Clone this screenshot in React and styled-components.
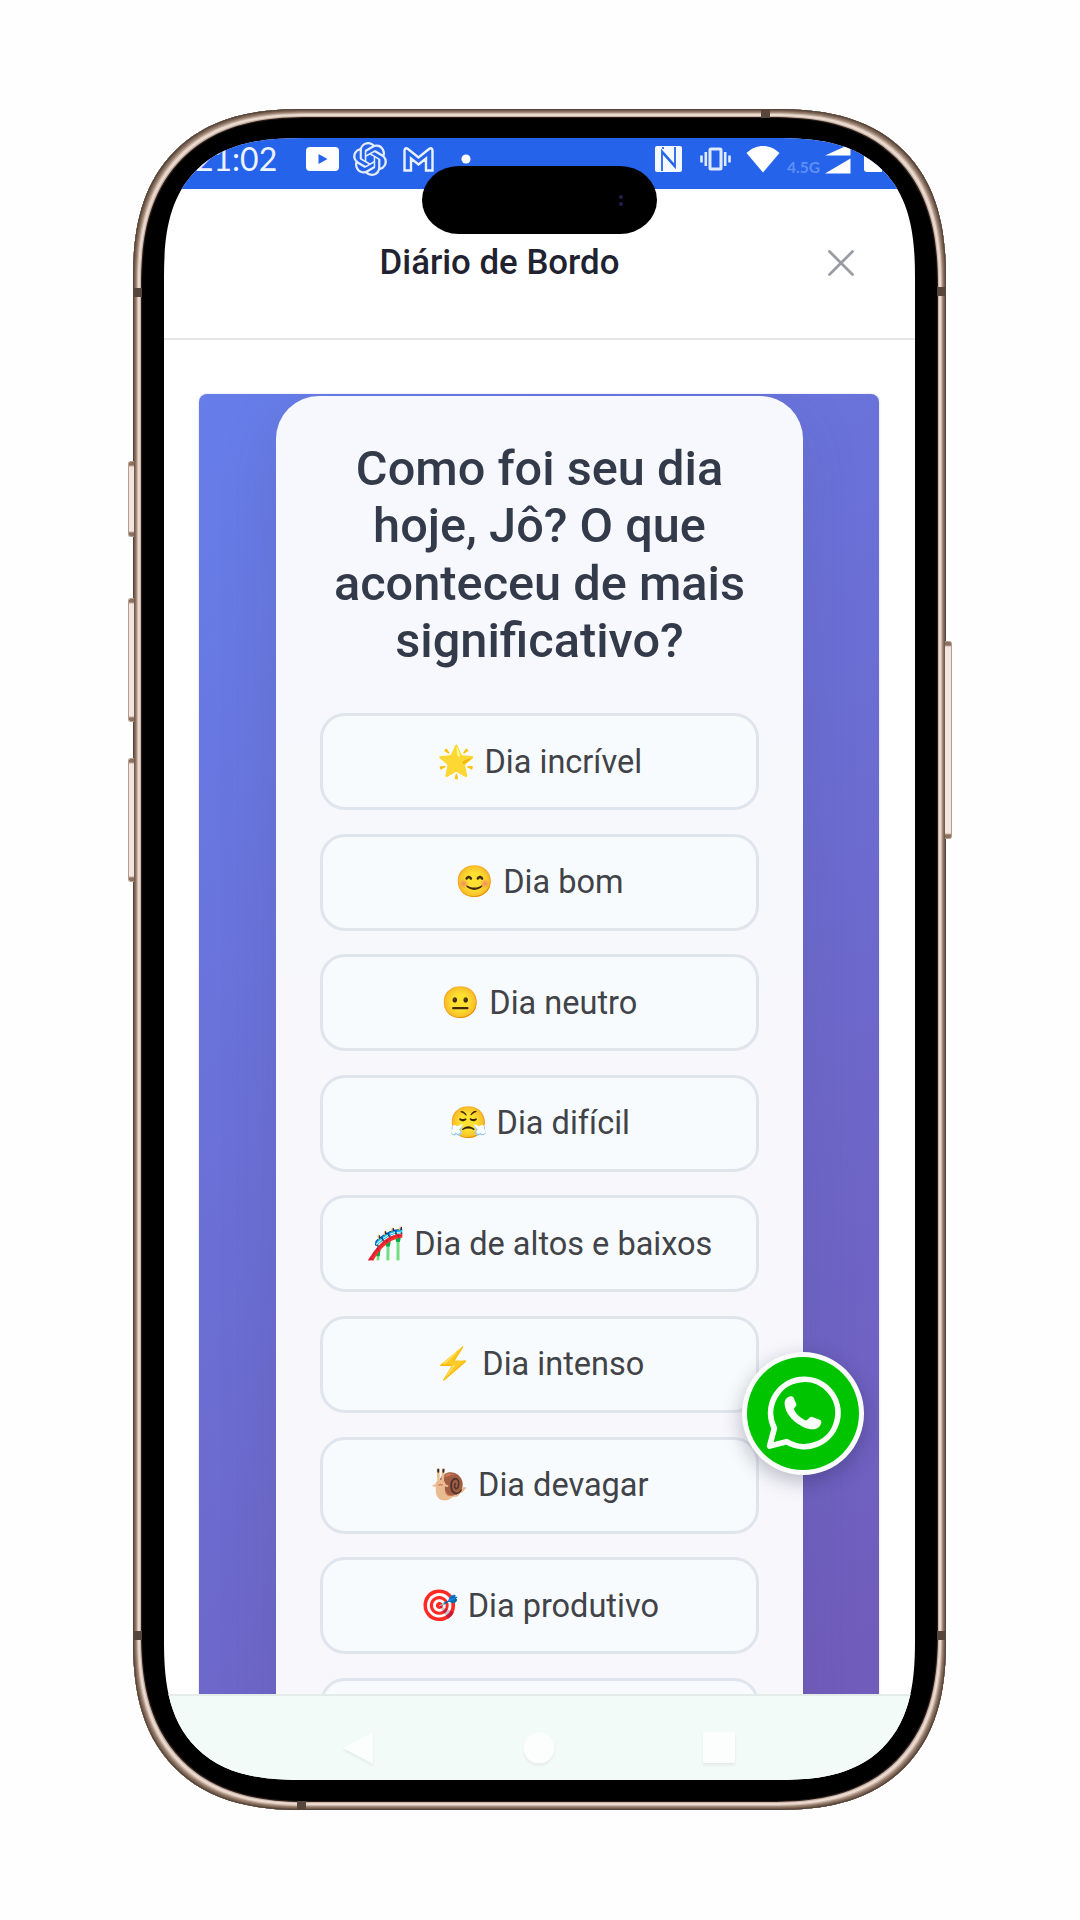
import React from "react";
import styled, { createGlobalStyle, css } from "styled-components";
import { SiOpenai } from "react-icons/si";

const GlobalStyle = createGlobalStyle`
  *, *::before, *::after { box-sizing: border-box; }
  body { margin: 0; background: #fefefe; font-family: Roboto, "Liberation Sans", sans-serif; }
`;

const Stage = styled.main`
  width: 1080px;
  height: 1920px;
  padding: 109px 134px 110px 133px;
  overflow: hidden;
`;

const Device = styled.div`
  position: relative;
  width: 813px;
  height: 1701px;
  padding: 29px 31px 30px 31px;
  background: #000;
  border-radius: 145px;
  box-shadow:
    inset 0 0 0 1px #54463d,
    inset 0 0 0 2px #745d4e,
    inset 0 0 0 3px #8b7160,
    inset 0 0 0 4px #a58c7c,
    inset 0 0 0 5px #cbb6a8,
    inset 0 0 0 7px #e9d9cf,
    inset 0 0 0 8px #c9b0a2,
    inset 0 0 0 9px #2b211c;
  @supports (corner-shape: superellipse(1.3)) {
    border-radius: 171px;
    corner-shape: superellipse(1.3);
  }
`;

const Screen = styled.div`
  position: relative;
  display: flex;
  flex-direction: column;
  width: 751px;
  height: 1642px;
  overflow: hidden;
  background: #fff;
  border-radius: 115px;
  @supports (corner-shape: superellipse(1.4)) {
    border-radius: 140px;
    corner-shape: superellipse(1.4);
  }
`;

const SideKey = styled.span`
  position: absolute;
  top: ${(p) => p.$top}px;
  height: ${(p) => p.$height}px;
  width: 6px;
  border: 1px solid #b59c8c;
  background: linear-gradient(#8b7060 0 3px, #f1e6df 5px calc(100% - 5px), #8b7060 calc(100% - 3px));
  ${(p) =>
    p.$side === "left"
      ? css`left: -5px; border-right: 0; border-radius: 3px 0 0 3px;`
      : css`right: -6px; width: 7px; border-left: 0; border-radius: 0 3px 3px 0;`}
`;

const Antenna = styled.span`
  position: absolute;
  background: #57463c;
  ${(p) =>
    p.$edge === "left" || p.$edge === "right"
      ? css`top: ${p.$at}px; width: 9px; height: 9px; ${p.$edge}: 0;`
      : css`left: ${p.$at}px; width: 9px; height: 9px; ${p.$edge}: 0;`}
`;

const Island = styled.div`
  position: absolute;
  top: 57px;
  left: 289px;
  display: flex;
  flex-direction: column;
  align-items: center;
  justify-content: center;
  gap: 3px;
  width: 235px;
  height: 68px;
  padding-left: 162px;
  background: #000;
  border-radius: 37px / 34px;
`;

const Lens = styled.i`
  width: 4px;
  height: 4px;
  border-radius: 50%;
  background: #20204c;
`;

const StatusBar = styled.div`
  display: flex;
  flex: none;
  justify-content: space-between;
  height: 51px;
  padding: 0 33px 9px 31px;
  background: #2563eb;
  color: #fff;
`;

const StatusGroup = styled.div`
  display: flex;
  align-items: center;
`;

const Clock = styled.span`
  width: 84px;
  margin-right: 27px;
  font: 400 32px/40px Lato, "Open Sans", sans-serif;
  color: #edf3ff;
  white-space: nowrap;
`;

const StatusIcon = styled.span`
  display: flex;
  margin-left: ${(p) => p.$gap || 0}px;
  svg { display: block; }
`;

const Network = styled.span`
  margin: 16px 0 0 7px;
  width: 33px;
  font: 700 15.5px/20px Lato, sans-serif;
  color: #5f8ff5;
`;

const Header = styled.header`
  display: flex;
  flex: none;
  align-items: center;
  gap: 25px;
  height: 151px;
  padding: 0 61px 1px 32px;
  border-bottom: 2.5px solid #e6e6e7;
`;

const Title = styled.h1`
  flex: 1;
  margin: 0;
  padding-bottom: 2px;
  font-size: 34.8px;
  font-weight: 500;
  line-height: 44px;
  color: #1f2230;
  text-align: center;
`;

const CloseButton = styled.button`
  display: flex;
  padding: 0;
  border: 0;
  background: none;
  color: #999ca3;
`;

const Content = styled.section`
  flex: 1;
  min-height: 0;
  overflow: hidden;
  padding: 54px 36px 0 35px;
`;

const Panel = styled.div`
  height: 2275px;
  padding: 2px 76px 0 77px;
  overflow: hidden;
  border-radius: 8px;
  background: linear-gradient(135deg, #667eea 0%, #764ba2 100%);
  box-shadow: 0 0 2px #c9c9f0;
`;

const Card = styled.div`
  height: 1830px;
  padding: 43.5px 44px 0;
  border-radius: 43px;
  background: linear-gradient(#f7f8fd, #f7f6fb);
  box-shadow: 0 20px 55px rgba(70, 70, 110, 0.17);
`;

const Question = styled.h2`
  margin: 0 -12px 43.5px;
  font-size: 48.7px;
  font-weight: 500;
  line-height: 57.5px;
  color: #333b4b;
  text-align: center;
`;

const Options = styled.div`
  display: flex;
  flex-direction: column;
  gap: 23.6px;
`;

const Option = styled.button`
  display: flex;
  align-items: center;
  justify-content: center;
  gap: 9px;
  height: 97px;
  flex: none;
  padding: 0;
  border: 3px solid #e0e5ed;
  border-radius: 25px;
  background: #f7fbfd;
  color: #414348;
  font-family: Roboto, sans-serif;
  font-size: 32.5px;
  line-height: 40px;
  white-space: nowrap;
`;

const Emoji = styled.span`
  font-family: "Noto Color Emoji", sans-serif;
  font-size: 31px;
  line-height: 40px;
`;

const NavBar = styled.nav`
  display: flex;
  flex: none;
  align-items: center;
  justify-content: center;
  gap: 147px;
  height: 86px;
  padding-top: 19px;
  border-top: 2px solid #e4ecea;
  background: #f2fbf8;
  svg { display: block; filter: drop-shadow(0 2px 1px #e4ebe8); }
  svg:first-child { margin: 0 2px 0 -2px; }
`;

const WhatsAppButton = styled.button`
  position: absolute;
  left: 578px;
  top: 1214px;
  display: flex;
  align-items: center;
  justify-content: center;
  width: 122px;
  height: 123px;
  padding: 0 0 2px 0;
  border: 5px solid #fafdfb;
  border-radius: 50%;
  background: #00c400;
  box-shadow: 0 6px 20px rgba(20, 20, 50, 0.28);
`;

const options = [
  ["🌟", "Dia incrível"],
  ["😊", "Dia bom"],
  ["😐", "Dia neutro"],
  ["😤", "Dia difícil"],
  ["🎢", "Dia de altos e baixos"],
  ["⚡", "Dia intenso"],
  ["🐌", "Dia devagar"],
  ["🎯", "Dia produtivo"],
  ["", ""],
];

const sideKeys = [
  ["left", 352, 76],
  ["left", 489, 124],
  ["left", 649, 124],
  ["right", 532, 198],
];

const antennas = [
  ["left", 179],
  ["right", 178],
  ["left", 1522],
  ["right", 1522],
  ["top", 628],
  ["bottom", 164],
];

function VideoIcon() {
  return (
    <svg width="33" height="24" viewBox="0 0 33 24">
      <rect width="33" height="24" rx="4" fill="#fff" />
      <path d="M12.5 7l9 5-9 5z" fill="#2563eb" />
    </svg>
  );
}

function MailIcon() {
  return (
    <svg width="31" height="25" viewBox="0 0 31 25" fill="none" stroke="#eaf1ff" strokeWidth="2.4">
      <path d="M1.5 23.5V3.5Q2 0 5 2L15.5 10.5 26 2Q29 0 29.5 3.5V23.5H23V11.5L15.5 17.5 8 11.5V23.5Z" />
    </svg>
  );
}

function NfcIcon() {
  return (
    <svg width="27" height="26" viewBox="0 0 27 26">
      <rect width="27" height="26" rx="2" fill="#f4f8ff" />
      <path d="M7 25V5L19 18.5M8 1V3" fill="none" stroke="#2563eb" strokeWidth="1.8" />
      <path d="M20 1V21L8 7.5" fill="none" stroke="#2563eb" strokeWidth="1.8" />
    </svg>
  );
}

function VibrateIcon() {
  return (
    <svg width="31" height="24" viewBox="0 0 31 24" fill="none" stroke="#dfeaff" strokeWidth="2.6">
      <rect x="10" y="2" width="11" height="20" rx="1" strokeWidth="3" />
      <path d="M5.8 5v14M25.2 5v14M1.5 8.5v7M29.5 8.5v7" />
    </svg>
  );
}

function WifiIcon() {
  return (
    <svg width="34" height="28" viewBox="0 0 34 28">
      <path d="M.5 8C10-1.5 24-1.5 33.5 8L17 27.5Z" fill="#fff" />
    </svg>
  );
}

function SignalIcon() {
  return (
    <svg width="26" height="30" viewBox="0 0 26 30">
      <path d="M0 11.5L25.5 0V11.5ZM0 29.5L25.5 14.5V29.5Z" fill="#fff" />
    </svg>
  );
}

function BatteryIcon() {
  return (
    <svg width="18" height="26" viewBox="0 0 18 26">
      <path d="M0 0H18V26H3Q0 26 0 23Z" fill="#fff" />
    </svg>
  );
}

function WhatsAppIcon() {
  return (
    <svg width="75" height="75" viewBox="200 168 225 225">
      <path
        d="M211 381L225 328A101 101 0 1 1 262 368Z"
        fill="none"
        stroke="#fafffa"
        strokeWidth="17"
        strokeLinejoin="round"
      />
      <path
        d="M262 238C268 231 278 229 283 236L291 255C293 261 284 266 284 271C290 286 303 297 318 304C324 306 330 292 337 293L361 302C368 305 367 313 362 320C355 330 342 333 330 330C295 322 258 290 256 255C255 247 258 242 262 238Z"
        fill="#fafffa"
      />
    </svg>
  );
}

export default function App() {
  return (
    <>
      <GlobalStyle />
      <Stage>
        <Device>
          {sideKeys.map(([side, top, height]) => (
            <SideKey key={side + top} $side={side} $top={top} $height={height} />
          ))}
          {antennas.map(([edge, at]) => (
            <Antenna key={edge + at} $edge={edge} $at={at} />
          ))}
          <Screen>
            <StatusBar>
              <StatusGroup>
                <Clock>21:02</Clock>
                <StatusIcon><VideoIcon /></StatusIcon>
                <StatusIcon $gap={14}><SiOpenai size={34} color="#e3edff" /></StatusIcon>
                <StatusIcon $gap={16}><MailIcon /></StatusIcon>
                <StatusIcon $gap={27}>
                  <svg width="10" height="10"><circle cx="5" cy="5" r="4.6" fill="#fff" /></svg>
                </StatusIcon>
              </StatusGroup>
              <StatusGroup>
                <StatusIcon><NfcIcon /></StatusIcon>
                <StatusIcon $gap={18}><VibrateIcon /></StatusIcon>
                <StatusIcon $gap={15}><WifiIcon /></StatusIcon>
                <Network>4.5G</Network>
                <StatusIcon $gap={5}><SignalIcon /></StatusIcon>
                <StatusIcon $gap={13}><BatteryIcon /></StatusIcon>
              </StatusGroup>
            </StatusBar>
            <Header>
              <Title>Diário de Bordo</Title>
              <CloseButton aria-label="Fechar">
                <svg width="26" height="26" viewBox="0 0 26 26" stroke="currentColor" strokeWidth="2.8" strokeLinecap="round">
                  <path d="M1.5 1.5L24.5 24.5M24.5 1.5L1.5 24.5" />
                </svg>
              </CloseButton>
            </Header>
            <Content>
              <Panel>
                <Card>
                  <Question>
                    Como foi seu dia
                    <br />
                    hoje, Jô? O que
                    <br />
                    aconteceu de mais
                    <br />
                    significativo?
                  </Question>
                  <Options>
                    {options.map(([emoji, label], i) => (
                      <Option key={i}>
                        {emoji && <Emoji>{emoji}</Emoji>}
                        {label}
                      </Option>
                    ))}
                  </Options>
                </Card>
              </Panel>
            </Content>
            <NavBar>
              <svg width="32" height="34" viewBox="0 0 32 34"><path d="M1 17L31 1V33Z" fill="#fbfefd" /></svg>
              <svg width="32" height="32" viewBox="0 0 32 32"><circle cx="16" cy="16" r="15.5" fill="#fbfefd" /></svg>
              <svg width="34" height="32" viewBox="0 0 34 32"><rect x="1" y="0" width="32" height="31" rx="1" fill="#fbfefd" /></svg>
            </NavBar>
            <WhatsAppButton aria-label="WhatsApp"><WhatsAppIcon /></WhatsAppButton>
          </Screen>
          <Island>
            <Lens />
            <Lens />
          </Island>
        </Device>
      </Stage>
    </>
  );
}
